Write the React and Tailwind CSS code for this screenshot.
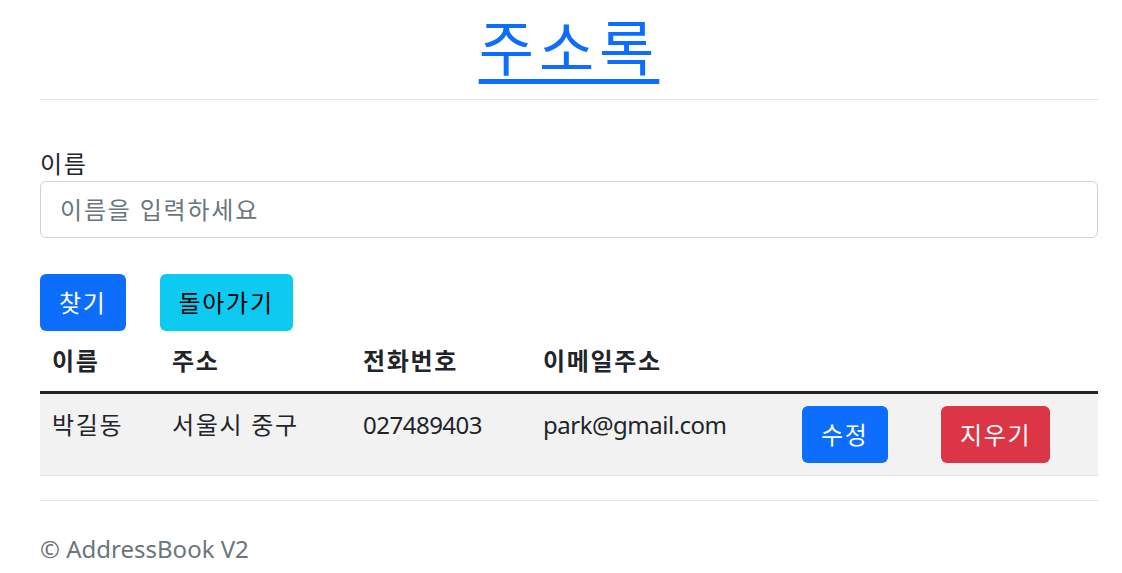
import React, { useState } from 'react';

const PEOPLE = [
  { name: '박길동', address: '서울시 중구', phone: '027489403', email: 'park@gmail.com' },
];

export default function App() {
  const [query, setQuery] = useState('');

  return (
    <div className="bg-white text-[24px] leading-[36px] text-[#212529] font-['Noto_Sans','Noto_Sans_CJK_KR',sans-serif]">
      <div className="ml-[40px] mr-[24px]">
        <h1 className="pt-[12px] text-center text-[60px] leading-[72px] font-normal">
          <a href="#" className="tracking-[5px] text-[#0d6efd] underline decoration-[5px] underline-offset-[8px]">주소록</a>
        </h1>
        <hr className="mt-[15px] border-t border-[#e2e2e2]" />

        <div className="mt-[46px]">
          <label className="block tracking-[1.7px] leading-[36px]">이름</label>
          <input
            type="text"
            value={query}
            onChange={e => setQuery(e.target.value)}
            placeholder="이름을 입력하세요"
            className="mt-[-1px] block h-[57px] w-full rounded-[6px] border border-[#ced4da] px-[19px] text-[24px] tracking-[1.8px] placeholder:text-[#6c757d] outline-none"
          />
        </div>

        <div className="mt-[36px] flex gap-[34px] tracking-[1.7px]">
          <button className="h-[57px] rounded-[6px] bg-[#0d6efd] px-[19px] text-white">찾기</button>
          <button className="h-[57px] rounded-[6px] bg-[#0dcaf0] px-[19px] text-black">돌아가기</button>
        </div>

        <table className="w-full border-collapse text-left">
          <thead>
            <tr className="border-b-[3px] border-[#212529] tracking-[1.7px]">
              <th className="w-[120px] p-[12px] font-bold">이름</th>
              <th className="w-[191px] p-[12px] font-bold">주소</th>
              <th className="w-[180px] p-[12px] font-bold">전화번호</th>
              <th className="w-[259px] p-[12px] font-bold">이메일주소</th>
              <th className="w-[139px] p-[12px]"></th>
              <th className="p-[12px]"></th>
            </tr>
          </thead>
          <tbody>
            {PEOPLE.map(p => (
              <tr key={p.email} className="bg-[#f2f2f2] border-b border-[#dee2e6] align-top">
                <td className="px-[12px] pt-[13px] pb-[12px] tracking-[1.7px]">{p.name}</td>
                <td className="px-[12px] pt-[13px] pb-[12px] tracking-[1.7px]">{p.address}</td>
                <td className="px-[12px] pt-[13px] pb-[12px] tracking-[-0.5px]">{p.phone}</td>
                <td className="px-[12px] pt-[13px] pb-[12px] tracking-[-0.5px]">{p.email}</td>
                <td className="px-[12px] pt-[12px] pb-[12px] tracking-[1.7px]">
                  <button className="h-[57px] rounded-[6px] bg-[#0d6efd] px-[19px] text-white">수정</button>
                </td>
                <td className="px-[12px] pt-[12px] pb-[12px] tracking-[1.7px]">
                  <button className="h-[57px] rounded-[6px] bg-[#dc3545] px-[19px] text-white">지우기</button>
                </td>
              </tr>
            ))}
          </tbody>
        </table>

        <hr className="mt-[24px] border-t border-[#e2e2e2]" />
        <footer className="pt-[30px] pb-[8px] text-[#6c757d]">© AddressBook V2</footer>
      </div>
    </div>
  );
}
